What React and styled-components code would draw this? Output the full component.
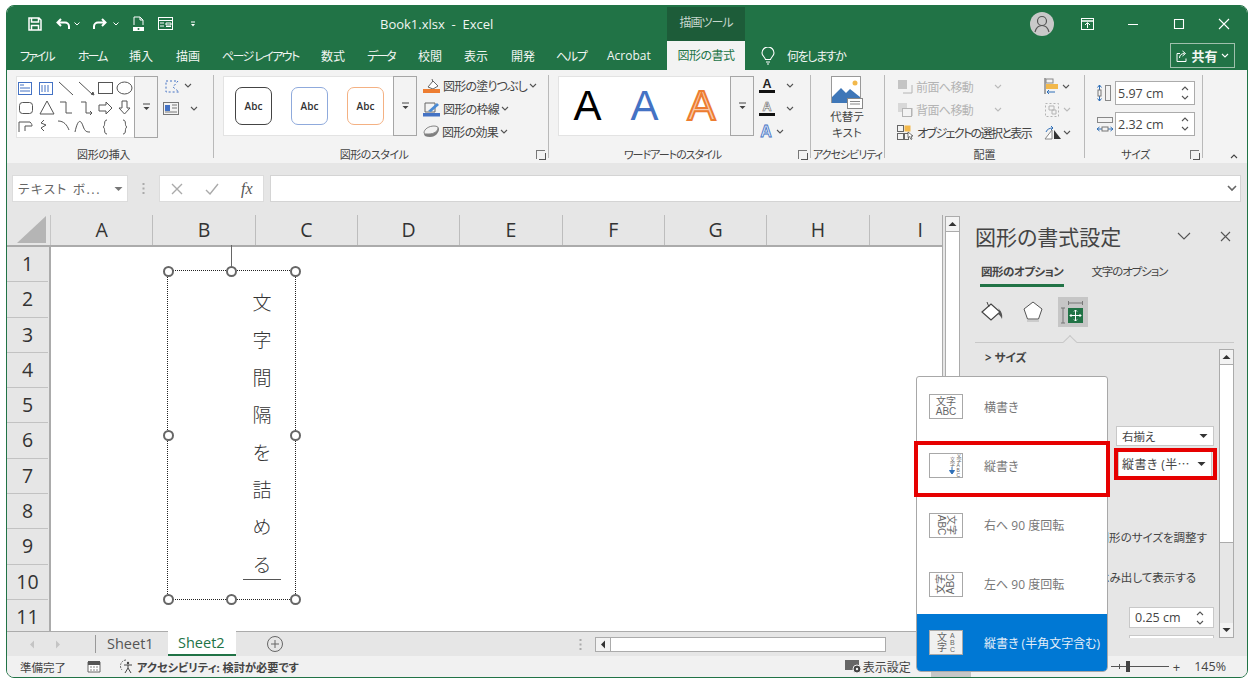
import React from 'react';
import styled, { createGlobalStyle } from 'styled-components';

const GREEN = '#217346';
const FONT = '"Open Sans", "Noto Sans CJK JP", sans-serif';

const Global = createGlobalStyle`
  html, body { margin: 0; padding: 0; background: #fff; overflow: hidden; }
  body { height: 683px; font-family: ${FONT}; font-feature-settings: "palt"; color: #3a3a3a; }
  * { box-sizing: border-box; }
`;

const Window = styled.div`
  position: relative;
  margin: 5px 0 0 6px;
  width: 1242px;
  height: 673px;
  border: 1px solid ${GREEN};
  border-radius: 8px;
  overflow: hidden;
  display: flex;
  flex-direction: column;
  background: #e6e6e6;
`;
const Spacer = styled.span`
  width: ${p => p.$w}px;
  flex: none;
`;

/* title bar */
const TitleBar = styled.div`
  height: 35px;
  flex: none;
  display: flex;
  background: ${GREEN};
  color: #fff;
`;
const Qat = styled.div`
  width: 373px;
  padding-left: 21px;
  display: flex;
  align-items: center;
`;
const QatSlot = styled.div`
  margin-left: ${p => p.$ml ?? 0}px;
  display: flex;
  align-items: center;
`;
const Title = styled.div`
  width: 287px;
  font-size: 13px;
  line-height: 36px;
  color: #f0f5f2;
  white-space: pre;
`;
const ContextTab = styled.div`
  width: 78px;
  margin-top: 1px;
  background: #1d5c39;
  color: #c5d6cc;
  font-size: 12px;
  letter-spacing: -1px;
  text-align: center;
  line-height: 31px;
`;
const WinControls = styled.div`
  flex: 1;
  display: flex;
  justify-content: flex-end;
`;
const WinBtn = styled.div`
  width: 45.5px;
  display: flex;
  align-items: center;
  justify-content: center;
`;

/* tab row */
const TabRow = styled.div`
  height: 29px;
  flex: none;
  display: flex;
  align-items: center;
  padding-left: 13px;
  background: ${GREEN};
  color: #f2f6f3;
  font-size: 12px;
`;
const Tab = styled.div`
  width: ${p => p.$w}px;
  flex: none;
  letter-spacing: ${p => p.$ls ?? 0}px;
  white-space: pre;
`;
const ActiveTab = styled.div`
  width: 78px;
  height: 29px;
  margin-right: 16px;
  background: #f3f3f3;
  color: ${GREEN};
  letter-spacing: -0.5px;
  text-align: center;
  line-height: 29px;
`;
const TellMe = styled.div`
  display: flex;
  align-items: center;
  gap: 12px;
  letter-spacing: -1.4px;
`;
const ShareBtn = styled.div`
  margin-left: auto;
  margin-right: 12px;
  width: 65px;
  height: 25px;
  border: 1px solid #9fc0ac;
  display: flex;
  align-items: center;
  justify-content: center;
  gap: 3px;
  font-size: 13px;
  font-weight: 700;
`;

/* ribbon */
const Ribbon = styled.div`
  height: 93px;
  flex: none;
  display: flex;
  background: #f3f3f3;
  color: #444;
  font-size: 12px;
`;
const Group = styled.div`
  position: relative;
  width: ${p => p.$w}px;
  flex: none;
  margin: 5px 0;
  border-right: 1px solid #b9b9b9;
  display: flex;
  flex-direction: column;
`;
const GroupBody = styled.div`
  flex: 1;
  display: flex;
  align-items: flex-start;
  padding: 1px 0 0 ${p => p.$pl ?? 9}px;
`;
const GroupLabel = styled.div`
  height: 12px;
  margin-bottom: -3px;
  font-size: 11px;
  letter-spacing: ${p => p.$ls ?? 0}px;
  text-align: center;
  line-height: 12px;
  white-space: nowrap;
  padding-right: ${p => p.$pr ?? 0}px;
`;
const Launcher = styled.div`
  position: absolute;
  right: 3px;
  bottom: -1px;
  width: 9px;
  height: 9px;
  border-left: 1px solid #777;
  border-top: 1px solid #777;
  &::after {
    content: '';
    position: absolute;
    left: 2px;
    top: 2px;
    width: 6px;
    height: 6px;
    border-right: 1px solid #555;
    border-bottom: 1px solid #555;
  }
`;
const Gallery = styled.div`
  display: flex;
  width: ${p => p.$w}px;
  height: ${p => p.$h ?? 60}px;
  flex: none;
  background: #fff;
  border: 1px solid #e3e3e3;
  border-right: 0;
`;
const GalleryItems = styled.div`
  flex: 1;
  display: flex;
  align-items: center;
  padding-left: ${p => p.$pl ?? 0}px;
  gap: ${p => p.$gap ?? 0}px;
`;
const GalleryMore = styled.div`
  width: 24px;
  flex: none;
  background: #f3f3f3;
  border: 1px solid #a6a6a6;
  margin: -1px 0;
  display: flex;
  align-items: center;
  justify-content: center;
`;
const StyleChip = styled.div`
  width: 37px;
  height: 38px;
  border: 1.5px solid ${p => p.$c};
  border-radius: 7px;
  font-size: 10px;
  font-weight: 600;
  color: #333;
  display: flex;
  align-items: center;
  justify-content: center;
`;
const ArtLetter = styled.div`
  width: 57px;
  text-align: center;
  font-family: "Liberation Sans", sans-serif;
  font-size: 42px;
  line-height: 58px;
  color: ${p => p.$c};
  -webkit-text-stroke: ${p => p.$stroke || '0'};
`;
const SideList = styled.div`
  display: flex;
  flex-direction: column;
  flex: none;
  width: ${p => (p.$w ? `${p.$w}px` : 'auto')};
  gap: ${p => p.$gap ?? 4}px;
  margin-left: ${p => p.$ml ?? 0}px;
  margin-top: ${p => p.$mt ?? 0}px;
`;
const SideRow = styled.div`
  height: ${p => p.$h ?? 19}px;
  display: flex;
  align-items: center;
  gap: ${p => p.$gap ?? 2}px;
  letter-spacing: ${p => p.$ls ?? 0}px;
  white-space: nowrap;
  color: ${p => (p.$off ? '#b4b4b4' : '#444')};
`;
const AltText = styled.div`
  width: 72px;
  display: flex;
  flex-direction: column;
  align-items: center;
  font-size: 11.5px;
  line-height: 16px;
  text-align: center;
`;
const SizeInput = styled.div`
  width: 80px;
  height: 24px;
  background: #fff;
  border: 1px solid #ababab;
  font-size: 12.5px;
  padding-left: 2px;
  display: flex;
  align-items: center;
  justify-content: space-between;
`;
const Spin = styled.div`
  width: 16px;
  font-size: 0;
  display: flex;
  flex-direction: column;
  align-items: center;
  gap: 4px;
  margin-right: ${p => p.$mr ?? 1}px;
`;
const Collapse = styled.div`
  flex: 1;
  display: flex;
  align-items: flex-end;
  justify-content: flex-end;
  padding: 0 9px 4px 0;
`;

/* formula band */
const FormulaBand = styled.div`
  height: 52px;
  flex: none;
  padding: 12px 6px 13px 5px;
  display: flex;
  background: #e6e6e6;
`;
const NameBox = styled.div`
  width: 116px;
  background: #fff;
  border: 1px solid #dcdcdc;
  font-size: 12.5px;
  letter-spacing: 1.6px;
  color: #666;
  display: flex;
  align-items: center;
  justify-content: space-between;
  padding: 0 4px 0 5px;
`;
const Grip = styled.div`
  width: 31px;
  display: flex;
  align-items: center;
  justify-content: center;
`;
const FxBox = styled.div`
  width: 105px;
  background: #fff;
  border: 1px solid #dcdcdc;
  display: flex;
  align-items: center;
  gap: 22px;
  padding-left: 11px;
  font-family: "Liberation Serif", serif;
  font-style: italic;
  font-size: 16px;
  color: #555;
  margin-right: 6px;
`;
const FormulaInput = styled.div`
  flex: 1;
  background: #fff;
  border: 1px solid #d4d4d4;
  display: flex;
  align-items: center;
  justify-content: flex-end;
  padding-right: 3px;
`;

/* sheet */
const Body = styled.div`
  height: 441px;
  flex: none;
  display: flex;
`;
const SheetColumn = styled.div`
  width: 954px;
  flex: none;
  display: flex;
  flex-direction: column;
`;
const SheetArea = styled.div`
  height: 416px;
  display: flex;
  gap: 2px;
  background: #e6e6e6;
`;
const GridWrap = styled.div`
  width: 936px;
  display: flex;
  flex-direction: column;
  border-right: 1px solid #aaa;
  overflow: hidden;
`;
const ColHeader = styled.div`
  height: 32px;
  flex: none;
  display: flex;
  border-bottom: 2px solid #ababab;
  background: #e6e6e6;
`;
const Corner = styled.div`
  width: 44px;
  flex: none;
  display: flex;
  align-items: flex-end;
  justify-content: flex-end;
  padding: 0 3px 1px 0;
  border-right: 1px solid #c6c6c6;
`;
const ColCell = styled.div`
  width: 102.33px;
  flex: none;
  border-right: 1px solid #bdbdbd;
  text-align: center;
  font-size: 19.5px;
  line-height: 30px;
  color: #333;
`;
const SheetRows = styled.div`
  flex: 1;
  display: flex;
`;
const RowHeader = styled.div`
  width: 44px;
  flex: none;
  padding-right: 1px;
  border-right: 2px solid #ababab;
`;
const RowCell = styled.div`
  height: 35.3px;
  border-bottom: 1px solid #c2c2c2;
  text-align: center;
  font-size: 19.5px;
  line-height: 34px;
  color: #333;
`;
const Cells = styled.div`
  position: relative;
  flex: 1;
  background: #fff;
`;
const RotateLine = styled.div`
  position: absolute;
  left: 180px;
  top: -2px;
  width: 1px;
  height: 26px;
  background: #666;
`;
const Shape = styled.div`
  position: absolute;
  left: 116px;
  top: 23px;
  width: 129px;
  height: 330px;
  border: 1px dotted #222;
`;
const Handle = styled.div`
  position: absolute;
  left: ${p => p.$x}%;
  top: ${p => p.$y}%;
  width: 11px;
  height: 11px;
  margin: -5.5px 0 0 -5.5px;
  border: 2px solid #666;
  border-radius: 50%;
  background: #fff;
`;
const VerticalText = styled.div`
  position: absolute;
  top: 21px;
  left: 74px;
  width: 40px;
  display: flex;
  flex-direction: column;
  align-items: center;
  gap: 15.4px;
  font-size: 19px;
  font-weight: 300;
  line-height: 22px;
  font-feature-settings: normal;
  color: #333;
  &::after {
    content: '';
    width: 38px;
    height: 1px;
    margin-top: -12px;
    background: #555;
  }
`;
const VScroll = styled.div`
  width: 15px;
  flex: none;
  background: #fff;
  border-left: 1px solid #ababab;
  border-right: 1px solid #ababab;
  border-top: 1px solid #ababab;
  margin-top: 1px;
`;
const ScrollBtn = styled.div`
  height: 15px;
  background: #f3f3f3;
  border-bottom: 1px solid #ababab;
  display: flex;
  align-items: center;
  justify-content: center;
`;

/* sheet tabs */
const TabBar = styled.div`
  height: 25px;
  flex: none;
  display: flex;
  align-items: stretch;
  background: #e6e6e6;
  border-top: 1px solid #ababab;
  font-size: 14.5px;
  color: #555;
`;
const TabNav = styled.div`
  width: 89px;
  display: flex;
  align-items: center;
  gap: 20px;
  padding-left: 22px;
  border-right: 1px solid #999;
  margin: 3px 0;
  color: #bbb;
`;
const SheetTab = styled.div`
  width: ${p => (p.$active ? 68 : 72)}px;
  flex: none;
  padding-left: ${p => (p.$active ? 10 : 11)}px;
  line-height: 23px;
  background: ${p => (p.$active ? '#fff' : 'transparent')};
  color: ${p => (p.$active ? GREEN : '#555')};
  border-bottom: ${p => (p.$active ? `2px solid ${GREEN}` : '0')};
  margin-top: ${p => (p.$active ? '-1px' : '0')};
`;
const AddSheet = styled.div`
  margin-left: 31px;
  display: flex;
  align-items: center;
`;
const HGrip = styled.div`
  margin-left: 296px;
  width: 16px;
  display: flex;
  align-items: center;
`;
const HScroll = styled.div`
  width: 291px;
  height: 15px;
  margin-top: 5px;
  background: #fff;
  border: 1px solid #ababab;
  display: flex;
`;
const HScrollBtn = styled.div`
  width: 15px;
  background: #f3f3f3;
  border-right: 1px solid #ababab;
  display: flex;
  align-items: center;
  justify-content: center;
`;

/* format pane */
const Pane = styled.div`
  flex: 1;
  padding: 0 13px 0 14px;
  background: #e6e6e6;
  display: flex;
  flex-direction: column;
  color: #444;
`;
const PaneTitle = styled.div`
  height: 42px;
  display: flex;
  align-items: center;
  font-size: 21px;
  color: #444;
`;
const PaneActions = styled.div`
  margin-left: auto;
  display: flex;
  align-items: center;
  gap: 29px;
  padding-right: 3.5px;
`;
const PaneTabs = styled.div`
  display: flex;
  gap: 26px;
  padding-left: 5px;
  font-size: 11.5px;
  height: 30px;
`;
const PaneTab = styled.div`
  height: 30px;
  line-height: 29px;
  padding: 0 1px;
  white-space: nowrap;
  letter-spacing: ${p => (p.$active ? -0.5 : -1.1)}px;
  font-weight: ${p => (p.$active ? 700 : 400)};
  border-bottom: ${p => (p.$active ? `3px solid ${GREEN}` : '0')};
`;
const PaneIcons = styled.div`
  display: flex;
  align-items: center;
  gap: 10.5px;
  height: 30px;
  margin-top: 10px;
  padding-left: 2px;
`;
const PaneIcon = styled.div`
  width: 30px;
  height: 30px;
  display: flex;
  align-items: center;
  justify-content: center;
  background: ${p => (p.$active ? '#c6c6c6' : 'transparent')};
`;
const PaneRule = styled.div`
  position: relative;
  height: 1px;
  margin-top: 15px;
  background: #c8c8c8;
  &::after {
    content: '';
    position: absolute;
    left: 90px;
    top: -5px;
    width: 9px;
    height: 9px;
    background: #e6e6e6;
    border-left: 1px solid #c8c8c8;
    border-top: 1px solid #c8c8c8;
    transform: rotate(45deg);
  }
`;
const PaneScrollArea = styled.div`
  display: flex;
  margin-top: 6px;
  height: 289px;
`;
const PaneList = styled.div`
  flex: 1;
  display: flex;
  flex-direction: column;
  align-items: flex-end;
  overflow: hidden;
  font-size: 11.5px;
  padding-right: 5px;
`;
const SectionHead = styled.div`
  align-self: flex-start;
  margin: 0 0 0 10px;
  font-weight: 700;
  font-size: 11.5px;
  line-height: 17px;
  height: 17px;
`;
const PaneSelect = styled.div`
  width: ${p => p.$w}px;
  height: ${p => p.$h}px;
  margin-top: ${p => p.$mt}px;
  margin-right: ${p => p.$mr ?? 0}px;
  flex: none;
  background: #fff;
  border: 1px solid #c8c8c8;
  display: flex;
  align-items: center;
  justify-content: space-between;
  padding: 0 5px 0 ${p => p.$pl ?? 5}px;
  font-size: ${p => p.$size ?? 11.5}px;
  letter-spacing: ${p => p.$ls ?? 0}px;
  white-space: nowrap;
`;
const PaneText = styled.div`
  margin-top: ${p => p.$mt}px;
  margin-right: ${p => p.$mr}px;
  flex: none;
  line-height: 18px;
  font-size: 11.5px;
  white-space: nowrap;
`;
const PaneScroll = styled.div`
  position: relative;
  width: 15px;
  flex: none;
  border: 1px solid #ababab;
  border-width: 1px 1px 0 1px;
  display: flex;
  flex-direction: column;
`;
const PaneThumb = styled.div`
  height: 178px;
  background: #fff;
  border-bottom: 1px solid #ababab;
`;
const PaneTrack = styled.div`
  flex: 1;
`;

/* status bar */
const StatusBar = styled.div`
  height: 21px;
  flex: none;
  display: flex;
  align-items: center;
  padding-left: 13px;
  background: #f1f1f1;
  font-size: 11.5px;
  color: #444;
`;
const StatusBold = styled.span`
  font-weight: 700;
  font-size: 11.2px;
`;
const StatusRight = styled.div`
  margin-left: auto;
  height: 100%;
  display: flex;
  align-items: center;
  font-size: 12px;
`;
const ViewBtn = styled.div`
  width: 40px;
  height: 100%;
  margin: 0 140px 0 20px;
  background: #c6c6c6;
`;
const Slider = styled.div`
  position: relative;
  width: 58px;
  height: 1px;
  background: #555;
  margin-right: 4px;
  &::before {
    content: '';
    position: absolute;
    left: 8px;
    top: -2px;
    width: 1px;
    height: 5px;
    background: #555;
  }
  &::after {
    content: '';
    position: absolute;
    left: 15px;
    top: -5px;
    width: 4px;
    height: 11px;
    background: #444;
  }
`;
const Plus = styled.span`
  font-size: 13px;
`;
const Percent = styled.div`
  margin: 0 21px 0 14px;
  font-size: 12.5px;
`;

/* dropdown */
const Menu = styled.div`
  position: absolute;
  left: 909px;
  top: 370px;
  width: 192px;
  height: 296px;
  background: #fff;
  border: 1px solid #a8a8a8;
  border-radius: 3px 3px 5px 5px;
  display: flex;
  flex-direction: column;
  overflow: hidden;
`;
const MenuItem = styled.div`
  flex: ${p => (p.$active ? '0 0 57px' : '1')};
  display: flex;
  align-items: center;
  gap: 21px;
  padding-left: 12px;
  font-size: 12px;
  color: ${p => (p.$active ? '#e4eef8' : '#777')};
  background: ${p => (p.$active ? '#0078d4' : 'transparent')};
  white-space: nowrap;
`;
const GlyphBox = styled.div`
  position: relative;
  width: 34px;
  height: 25px;
  flex: none;
  background: ${p => (p.$active ? '#f0f0f0' : '#fff')};
  border: 1px solid #a8a8a8;
  color: #666;
  display: flex;
  align-items: center;
  justify-content: center;
  overflow: hidden;
`;
const GlyphText = styled.div`
  transform: rotate(${p => p.$rot ?? 0}deg);
  transform-origin: center;
  font-family: "Liberation Sans", "Noto Sans CJK JP", sans-serif;
  font-feature-settings: normal;
  font-size: 10px;
  line-height: 10px;
  text-align: center;
  white-space: pre;
`;
const GlyphColumns = styled.div`
  margin-left: ${p => p.$ml ?? 0}px;
  display: flex;
  align-items: center;
  gap: ${p => p.$gap ?? 2}px;
`;
const GlyphColumn = styled.div`
  display: flex;
  flex-direction: column;
  align-items: center;
  font-family: "Liberation Sans", "Noto Sans CJK JP", sans-serif;
  font-size: ${p => p.$size ?? 10}px;
  line-height: ${p => p.$size ?? 10}px;
`;
const RedBox = styled.div`
  position: absolute;
  left: ${p => p.$x}px;
  top: ${p => p.$y}px;
  width: ${p => p.$w}px;
  height: ${p => p.$h}px;
  border: 4px solid #e60000;
`;

/* drawn icons */
const Svg = ({ w, h, children, ...rest }) => (
  <svg width={w} height={h} viewBox={`0 0 ${w} ${h}`} fill="none" style={{ flex: 'none', display: 'block' }} {...rest}>
    {children}
  </svg>
);
const Caret = ({ c = '#555' }) => (
  <Svg w={8} h={5}><path d="M1 1l3 3 3-3" stroke={c} strokeWidth="1.1" /></Svg>
);
const CaretUp = ({ c = '#555' }) => (
  <Svg w={8} h={5}><path d="M1 4l3-3 3 3" stroke={c} strokeWidth="1.1" /></Svg>
);
const Tri = ({ dir = 'up', c = '#333' }) => {
  const d = { up: 'M0.5 5L4.5 1l4 4z', down: 'M0.5 1L4.5 5l4-4z', left: 'M5 0.5L1 4.5l4 4z', right: 'M1 0.5L5 4.5l-4 4z' }[dir];
  return dir === 'left' || dir === 'right'
    ? <Svg w={6} h={9}><path d={d} fill={c} /></Svg>
    : <Svg w={9} h={6}><path d={d} fill={c} /></Svg>;
};
const MoreIcon = () => (
  <Svg w={9} h={8}><path d="M1 1h7" stroke="#444" /><path d="M1.5 4h6L4.500 7z" fill="#444" /></Svg>
);
const MoreSmall = () => (
  <Svg w={6} h={6}><path d="M1 1h4" stroke="#fff" /><path d="M1 3h4L3 5.500z" fill="#fff" /></Svg>
);
const SaveIcon = () => (
  <Svg w={14} h={14}><path d="M1 1h10l2 2v10H1z M3.500 1v4h7V1 M3.500 13V8.500h7V13" stroke="#fff" strokeWidth="1.500" /></Svg>
);
const UndoIcon = ({ flip }) => (
  <svg width={15} height={12} viewBox="0 0 15 12" fill="none" style={{ transform: flip ? 'scaleX(-1)' : 'none', display: 'block' }}>
    <path d="M5 1L1.500 4.500 5 8M2 4.500h7a4 4 0 0 1 4 4V11" stroke="#fff" strokeWidth="2" />
  </svg>
);
const QatCaret = () => (
  <Svg w={6} h={4}><path d="M.5.500l2.500 2.500 2.500-2.500" stroke="#fff" /></Svg>
);
const PreviewIcon = () => (
  <Svg w={13} h={16}><path d="M2 9V1h6l3 3v5M8 1v3h3" stroke="#fff" /><rect x="1" y="11" width="11" height="4" fill="#fff" /><circle cx="6.500" cy="13" r="1" fill={GREEN} /></Svg>
);
const FormIcon = () => (
  <Svg w={15} h={13}><rect x=".5" y=".5" width="14" height="12" stroke="#fff" /><path d="M.5 3.500h14M2 6h4M8 6h5v2H8zM2 9h4M8 9.500h5" stroke="#fff" /></Svg>
);
const Avatar = () => (
  <Svg w={24} h={24}>
    <circle cx="12" cy="12" r="12" fill="#c9c9c9" />
    <circle cx="12" cy="9" r="4.500" stroke="#555" strokeWidth="1.200" />
    <path d="M5 20c1-4 4-6.500 7-6.500s6 2.500 7 6.500" stroke="#555" strokeWidth="1.200" />
  </Svg>
);
const RibbonOptions = () => (
  <Svg w={13} h={12}><rect x=".5" y=".5" width="12" height="11" stroke="#fff" /><path d="M.5 3h12" stroke="#fff" strokeWidth="1.500" /><path d="M6.500 10V5M4 7l2.500-2.500L9 7" stroke="#fff" /></Svg>
);
const LineIcon = ({ d, c = '#fff', w = 12, h = 12, sw = 1.1 }) => (
  <Svg w={w} h={h}><path d={d} stroke={c} strokeWidth={sw} /></Svg>
);
const Bulb = () => (
  <Svg w={14} h={18}><path d="M4.500 12.500C4 10 1 9 1 6a6 6 0 0 1 12 0c0 3-3 4-3.500 6.500zM5 15h4M6 17h2" stroke="#fff" strokeWidth="1.100" /></Svg>
);
const ShareIcon = () => (
  <Svg w={12} h={12}><path d="M4 3.500H1v8h9v-3M3.500 8c0-3 2-4.500 5-4.500M6.500 1l3 2.500-3 2.500" stroke="#fff" /></Svg>
);
const ShapesGallery = () => (
  <Svg w={117} h={60} stroke="#555">
    <rect x="1.500" y="5.500" width="13" height="12" stroke="#4472c4" />
    <path d="M3 8h4M3 11h10M3 14h10" stroke="#4472c4" />
    <rect x="22.500" y="5.500" width="13" height="12" stroke="#4472c4" />
    <path d="M25 8v7M28 8v7M31 8v7" stroke="#4472c4" />
    <path d="M42 5l14 13M62 5l14 13" stroke="#555" />
    <path d="M77 18l-3-1 2-2z" fill="#555" />
    <rect x="81.500" y="5.500" width="14" height="11" />
    <ellipse cx="107.500" cy="11" rx="7.500" ry="6" />
    <rect x="2.500" y="25.500" width="13" height="11" rx="3" />
    <path d="M30 24l7 13H23zM43 25h6v11h6M64 25h5v11h6M73 34l2 2-2 2" />
    <path d="M82 28h7v-3l6 6-6 6v-3h-7zM105 24h5v7h3l-5.500 6-5.500-6h3z" />
    <path d="M2 55V45h11c2 2 2 3 2 4H8v5M27 43l-3 3 5 2-5 3 3 3M41 44c6 0 9 4 11 9M58 55c3-14 6-12 8-6s4 6 7 6" />
    <path d="M90 43c-4 0-1 6-4 7 3 1 0 7 4 7M106 43c4 0 1 6 4 7-3 1 0 7-4 7" />
  </Svg>
);
const EditPointsIcon = () => (
  <Svg w={20} h={16}>
    <path d="M3 3h12l-5 6 6 5H3z" stroke="#4472c4" strokeDasharray="2 2" />
  </Svg>
);
const TextBoxIcon = () => (
  <Svg w={16} h={13}><rect x=".5" y=".5" width="15" height="12" stroke="#777" /><path d="M2 3h5v6H2z" fill="#4472c4" /><path d="M9 3h5M9 6h5M2 10h12" stroke="#777" /></Svg>
);
const FillIcon = () => (
  <Svg w={18} h={16}><path d="M5 9l5-6 5 5-5 3z" stroke="#666" fill="#fff" /><path d="M9 1l1 3" stroke="#666" /><rect y="11" width="17" height="4" fill="#ed7d31" /></Svg>
);
const BorderIcon = () => (
  <Svg w={18} h={16}><path d="M2 2h10v9H2z" stroke="#666" /><path d="M5 10l9-8 2 2-8 7z" fill="#4a8ad4" /><rect y="12" width="17" height="3.500" fill="#4472c4" /></Svg>
);
const EffectIcon = () => (
  <Svg w={17} h={14}><path d="M1 9c0-5 5-8 10-8 3 0 5 1 5 3 0 3-3 8-9 8-4 0-6-1-6-3z" fill="#7f7f7f" /><path d="M1 8c0-4 5-7 10-7 3 0 4 1 4 2 0 3-4 6-9 6-3 0-5 0-5-1z" fill="#f2f2f2" stroke="#888" /></Svg>
);
const UnderA = ({ bar, c = '#222', outlined }) => (
  <Svg w={16} h={17}>
    <text x="8" y="11" textAnchor="middle" fontSize="12.500" fontFamily="Liberation Sans" fontWeight="700" fill={outlined ? '#fff' : c} stroke={outlined ? '#666' : 'none'} strokeWidth=".6">A</text>
    <rect y="13" width="16" height="3" fill={bar} />
  </Svg>
);
const EffectA = () => (
  <Svg w={14} h={15}>
    <text x="7" y="13" textAnchor="middle" fontSize="16" fontFamily="Liberation Sans" fontWeight="700" fill="#dce8f8" stroke="#4472c4" strokeWidth=".8">A</text>
  </Svg>
);
const AltIcon = () => (
  <Svg w={32} h={33}>
    <rect x=".500" y=".500" width="29" height="26" fill="#fff" stroke="#999" />
    <circle cx="24" cy="7" r="2.500" fill="#f2b84b" />
    <path d="M1 21l9-9 5 5 4-4 10 8v6H1z" fill="#3f77b8" />
    <rect x="16.500" y="22.500" width="15" height="10" fill="#fff" stroke="#888" />
    <path d="M19 25.500h10M19 28h10" stroke="#888" />
  </Svg>
);
const FrontIcon = ({ back }) => (
  <Svg w={16} h={14}>
    <rect x="1" y="0" width="9" height="9" fill={back ? '#d8d8d8' : '#c4c4c4'} />
    <path d="M6 13h9V5" stroke="#b4b4b4" />
    {back && <rect x="5.500" y="5.500" width="9" height="8" fill="#f3f3f3" stroke="#b4b4b4" />}
  </Svg>
);
const SelectionIcon = () => (
  <Svg w={17} h={16}>
    <rect x=".5" y=".5" width="6" height="6" stroke="#666" />
    <rect x="7.500" y=".5" width="6" height="6" fill="#f2b84b" />
    <rect x=".5" y="8.500" width="6" height="6" stroke="#666" />
    <rect x="7.500" y="8.500" width="4" height="6" stroke="#666" />
    <path d="M11 7l5 4h-2l1 3-1 .5-1.500-3-1.500 1z" fill="#fff" stroke="#444" strokeWidth=".7" />
  </Svg>
);
const AlignIcon = () => (
  <Svg w={15} h={17}><path d="M1 0v16" stroke="#555" /><rect x="2" y="1" width="7" height="4" stroke="#888" /><rect x="2" y="6" width="12" height="5" fill="#f2b84b" /><path d="M11 14H3M5 12l-2 2 2 2" stroke="#2f6fb7" /></Svg>
);
const GroupIcon = () => (
  <Svg w={16} h={16}><rect x="1.500" y="1.500" width="13" height="13" stroke="#b4b4b4" strokeDasharray="2 2" /><path d="M5 4h5v4H5zM8 8h4v4H8z" stroke="#b4b4b4" /></Svg>
);
const RotateIcon = () => (
  <Svg w={18} h={14}><path d="M1 13l7-9v9z" fill="#fff" stroke="#888" /><path d="M10 4l7 9h-7z" fill="#333" /><path d="M2 6c1-3 4-4 7-4M7 0l2 2-2 2" stroke="#2f6fb7" /></Svg>
);
const HeightIcon = () => (
  <Svg w={16} h={18}><path d="M3.500 1v16M1.500 3.500l2-2.500 2 2.500M1.500 14.500l2 2.500 2-2.500" stroke="#2f6fb7" /><rect x="2" y="6" width="3" height="6" fill="#f3f3f3" stroke="#777" /><rect x="9.500" y="1.500" width="5" height="15" stroke="#888" /></Svg>
);
const WidthIcon = () => (
  <Svg w={18} h={17}><rect x="1.500" y="1.500" width="15" height="5" stroke="#888" /><path d="M1 13h16M3.500 11l-2.500 2 2.500 2M14.500 11l2.500 2-2.500 2" stroke="#2f6fb7" /><rect x="6" y="11" width="6" height="4" fill="#f3f3f3" stroke="#777" /></Svg>
);
const Paint = () => (
  <Svg w={24} h={24}><path d="M2 12l9-8 9 8-9 8z" fill="#fff" stroke="#444" strokeWidth="1.200" /><path d="M9 7l-2-5" stroke="#444" /><path d="M18 8c3 3 5 6 4 11-1-2-2-4-4-5l2-2z" fill="#555" /></Svg>
);
const Pentagon = () => (
  <Svg w={20} h={22}><path d="M10 1l9 7-3.500 10h-11L1 8z" fill="#fff" stroke="#555" /><path d="M4 20h12" stroke="#ccc" strokeWidth="2" /></Svg>
);
const LayoutIcon = () => (
  <Svg w={28} h={24}>
    <path d="M9 3h15M9.500 1v4M23.500 1v4" stroke="#777" />
    <path d="M2 8h4M2 23h4M4 8v15" stroke="#777" />
    <rect x="9" y="8" width="15" height="15" fill={GREEN} />
    <path d="M16.500 10v11M11 15.500h11M15 11.500l1.500-1.500 1.500 1.500M15 19.500l1.500 1.500 1.500-1.500M12.500 14l-1.500 1.500 1.500 1.500M20.500 14l1.500 1.500-1.500 1.500" stroke="#fff" />
  </Svg>
);
const SheetPlus = () => (
  <Svg w={16} h={16}><circle cx="8" cy="8" r="7.500" stroke="#666" /><path d="M8 4v8M4 8h8" stroke="#666" /></Svg>
);
const Dots = () => (
  <Svg w={3} h={13}><path d="M1.500 1v2M1.500 5.500v2M1.500 10v2" stroke="#aaa" strokeWidth="2" /></Svg>
);
const CalcIcon = () => (
  <Svg w={14} h={13}><path d="M1 2h12v10H1z" fill="#fff" stroke="#666" /><rect x="1" y="1" width="12" height="4" fill="#555" /><path d="M3 7h2M6 7h2M9 7h2M3 10h2M6 10h2M9 10h2" stroke="#888" /></Svg>
);
const AccessIcon = () => (
  <Svg w={17} h={15}><path d="M8 1a6 6 0 0 0-4 10" stroke="#666" strokeDasharray="2 1" /><circle cx="10" cy="4" r="1.200" fill="#444" /><path d="M6 6h8M10 6v3l-3 5M10 9l3 5" stroke="#444" /></Svg>
);
const DisplayIcon = () => (
  <Svg w={17} h={15}><rect y="1" width="14" height="10" fill="#666" /><circle cx="12" cy="10" r="4" fill="#444" stroke="#f1f1f1" /><circle cx="12" cy="10" r="1.200" fill="#f1f1f1" /></Svg>
);
const VerticalArrow = () => (
  <Svg w={6} h={7}><path d="M3 0v4M0.500 3.500L3 7l2.500-3.500z" fill="#2f6fb7" stroke="#2f6fb7" /></Svg>
);

const tabs = [
  ['ファイル', 58, -2],
  ['ホーム', 51, -2],
  ['挿入', 47, 0],
  ['描画', 46, 0],
  ['ページ レイアウト', 99, -1.6],
  ['数式', 46, 0],
  ['データ', 51, -2],
  ['校閲', 46, 0],
  ['表示', 47, 0],
  ['開発', 45, 0],
  ['ヘルプ', 51, -1.3],
  ['Acrobat', 60, 0],
];
const columns = ['A', 'B', 'C', 'D', 'E', 'F', 'G', 'H', 'I'];
const rows = [1, 2, 3, 4, 5, 6, 7, 8, 9, 10, 11];
const verticalText = ['文', '字', '間', '隔', 'を', '詰', 'め', 'る'];
const handles = [[0, 0], [50, 0], [100, 0], [0, 50], [100, 50], [0, 100], [50, 100], [100, 100]];

function TopBars() {
  return (
    <>
      <TitleBar>
        <Qat>
          <QatSlot><SaveIcon /></QatSlot>
          <QatSlot $ml={14}><UndoIcon /></QatSlot>
          <QatSlot $ml={3}><QatCaret /></QatSlot>
          <QatSlot $ml={12}><UndoIcon flip /></QatSlot>
          <QatSlot $ml={6}><QatCaret /></QatSlot>
          <QatSlot $ml={13}><PreviewIcon /></QatSlot>
          <QatSlot $ml={13}><FormIcon /></QatSlot>
          <QatSlot $ml={17}><MoreSmall /></QatSlot>
        </Qat>
        <Title>Book1.xlsx  -  Excel</Title>
        <ContextTab>描画ツール</ContextTab>
        <WinControls>
          <WinBtn><Avatar /></WinBtn>
          <WinBtn><RibbonOptions /></WinBtn>
          <WinBtn><LineIcon d="M1 6.500h10" /></WinBtn>
          <WinBtn><LineIcon d="M1.500 1.500h9v9h-9z" /></WinBtn>
          <WinBtn><LineIcon d="M1 1l10 10M11 1L1 11" /></WinBtn>
        </WinControls>
      </TitleBar>
      <TabRow>
        {tabs.map(([label, w, ls]) => <Tab key={label} $w={w} $ls={ls}>{label}</Tab>)}
        <ActiveTab>図形の書式</ActiveTab>
        <TellMe><Bulb />何をしますか</TellMe>
        <ShareBtn><ShareIcon />共有<Caret c="#fff" /></ShareBtn>
      </TabRow>
    </>
  );
}

function RibbonBar() {
  return (
    <Ribbon>
      <Group $w={207}>
        <GroupBody>
          <Gallery $w={141} $h={62}>
            <GalleryItems><ShapesGallery /></GalleryItems>
            <GalleryMore><MoreIcon /></GalleryMore>
          </Gallery>
          <SideList $ml={6} $gap={4}>
            <SideRow $gap={1}><EditPointsIcon /><Caret /></SideRow>
            <SideRow $gap={11}><TextBoxIcon /><Caret /></SideRow>
          </SideList>
        </GroupBody>
        <GroupLabel $pr={13} $ls={-0.3}>図形の挿入</GroupLabel>
      </Group>
      <Group $w={335}>
        <GroupBody>
          <Gallery $w={194}>
            <GalleryItems $pl={11} $gap={19}>
              <StyleChip $c="#444">Abc</StyleChip>
              <StyleChip $c="#8faadc">Abc</StyleChip>
              <StyleChip $c="#f4b183">Abc</StyleChip>
            </GalleryItems>
            <GalleryMore><MoreIcon /></GalleryMore>
          </Gallery>
          <SideList $ml={6} $gap={4}>
            <SideRow $ls={-0.8}><FillIcon />図形の塗りつぶし<Caret /></SideRow>
            <SideRow $ls={-0.7}><BorderIcon />図形の枠線<Caret /></SideRow>
            <SideRow $ls={-0.7}><EffectIcon />図形の効果<Caret /></SideRow>
          </SideList>
        </GroupBody>
        <GroupLabel $ls={-0.5} $pr={14}>図形のスタイル</GroupLabel>
        <Launcher />
      </Group>
      <Group $w={262}>
        <GroupBody>
          <Gallery $w={194}>
            <GalleryItems>
              <ArtLetter $c="#000">A</ArtLetter>
              <ArtLetter $c="#4472c4">A</ArtLetter>
              <ArtLetter $c="#f8cbad" $stroke="2px #ed7d31">A</ArtLetter>
            </GalleryItems>
            <GalleryMore><MoreIcon /></GalleryMore>
          </Gallery>
          <SideList $ml={7} $gap={4}>
            <SideRow $gap={11}><UnderA bar="#111" /><Caret /></SideRow>
            <SideRow $gap={11}><UnderA bar="#111" outlined /><Caret /></SideRow>
            <SideRow $gap={3}><EffectA /><Caret /></SideRow>
          </SideList>
        </GroupBody>
        <GroupLabel $ls={-1} $pr={14}>ワードアートのスタイル</GroupLabel>
        <Launcher />
      </Group>
      <Group $w={74}>
        <GroupBody $pl={0}>
          <AltText><AltIcon />代替テ<br />キスト</AltText>
        </GroupBody>
        <GroupLabel $ls={-1}>アクセシビリティ</GroupLabel>
      </Group>
      <Group $w={200}>
        <GroupBody $pl={12}>
          <SideList $gap={4} $mt={1} $w={147}>
            <SideRow $off $gap={3} $ls={-0.6}><FrontIcon />前面へ移動<Spacer $w={15} /><Caret c="#bbb" /></SideRow>
            <SideRow $off $gap={3} $ls={-0.6}><FrontIcon back />背面へ移動<Spacer $w={15} /><Caret c="#bbb" /></SideRow>
            <SideRow $gap={3} $ls={-1.6}><SelectionIcon />オブジェクトの選択と表示</SideRow>
          </SideList>
          <SideList $mt={1} $gap={4}>
            <SideRow $gap={3}><AlignIcon /><Caret /></SideRow>
            <SideRow $gap={3}><GroupIcon /><Caret c="#bbb" /></SideRow>
            <SideRow $gap={1}><RotateIcon /><Caret /></SideRow>
          </SideList>
        </GroupBody>
        <GroupLabel>配置</GroupLabel>
      </Group>
      <Group $w={118}>
        <GroupBody $pl={11}>
          <SideList $gap={7} $mt={5}>
            <SideRow $gap={3} $h={24}>
              <HeightIcon />
              <SizeInput>5.97 cm<Spin><CaretUp /><Caret /></Spin></SizeInput>
            </SideRow>
            <SideRow $gap={1} $h={24}>
              <WidthIcon />
              <SizeInput>2.32 cm<Spin><CaretUp /><Caret /></Spin></SizeInput>
            </SideRow>
          </SideList>
        </GroupBody>
        <GroupLabel $pr={16} $ls={-0.5}>サイズ</GroupLabel>
        <Launcher />
      </Group>
      <Collapse><CaretUp c="#444" /></Collapse>
    </Ribbon>
  );
}

function SheetGrid() {
  return (
    <SheetArea>
      <GridWrap>
        <ColHeader>
          <Corner>
            <Svg w={30} h={28}><path d="M29 0v27H0z" fill="#b5b5b5" /></Svg>
          </Corner>
          {columns.map(c => <ColCell key={c}>{c}</ColCell>)}
        </ColHeader>
        <SheetRows>
          <RowHeader>
            {rows.map(r => <RowCell key={r}>{r}</RowCell>)}
          </RowHeader>
          <Cells>
            <RotateLine />
            <Shape>
              <VerticalText>
                {verticalText.map((t, i) => <span key={i}>{t}</span>)}
              </VerticalText>
              {handles.map(([x, y]) => <Handle key={`${x}-${y}`} $x={x} $y={y} />)}
            </Shape>
          </Cells>
        </SheetRows>
      </GridWrap>
      <VScroll>
        <ScrollBtn><Tri dir="up" /></ScrollBtn>
      </VScroll>
    </SheetArea>
  );
}

function SheetTabs() {
  return (
    <TabBar>
      <TabNav><Tri dir="left" c="#c4c4c4" /><Tri dir="right" c="#c4c4c4" /></TabNav>
      <SheetTab>Sheet1</SheetTab>
      <SheetTab $active>Sheet2</SheetTab>
      <AddSheet><SheetPlus /></AddSheet>
      <HGrip><Dots /></HGrip>
      <HScroll>
        <HScrollBtn><Tri dir="left" /></HScrollBtn>
      </HScroll>
    </TabBar>
  );
}

function FormatPane() {
  return (
    <Pane>
      <PaneTitle>
        図形の書式設定
        <PaneActions>
          <LineIcon w={14} h={8} c="#555" d="M1 1l6 6 6-6" />
          <LineIcon w={11} h={11} c="#555" d="M1 1l9 9M10 1l-9 9" />
        </PaneActions>
      </PaneTitle>
      <PaneTabs>
        <PaneTab $active>図形のオプション</PaneTab>
        <PaneTab>文字のオプション</PaneTab>
      </PaneTabs>
      <PaneIcons>
        <PaneIcon><Paint /></PaneIcon>
        <PaneIcon><Pentagon /></PaneIcon>
        <PaneIcon $active><LayoutIcon /></PaneIcon>
      </PaneIcons>
      <PaneRule />
      <PaneScrollArea>
        <PaneList>
          <SectionHead>&gt; サイズ</SectionHead>
          <PaneSelect $w={98} $h={20} $mt={60}>右揃え<Tri dir="down" /></PaneSelect>
          <PaneSelect $w={94} $h={26} $mt={5} $mr={2} $pl={3} $size={12} $ls={0.4}>縦書き (半⋯<Tri dir="down" /></PaneSelect>
          <PaneText $mt={52} $mr={7}>図形のサイズを調整す</PaneText>
          <PaneText $mt={22} $mr={18}>はみ出して表示する</PaneText>
          <PaneSelect $w={85} $h={21} $mt={20} $size={12.5}>0.25 cm<Spin $mr={0}><CaretUp /><Caret /></Spin></PaneSelect>
          <PaneSelect $w={85} $h={21} $mt={7} />
        </PaneList>
        <PaneScroll>
          <ScrollBtn><Tri dir="up" /></ScrollBtn>
          <PaneThumb />
          <PaneTrack />
          <ScrollBtn><Tri dir="down" /></ScrollBtn>
        </PaneScroll>
      </PaneScrollArea>
    </Pane>
  );
}

function TextDirectionMenu() {
  return (
    <Menu>
      <MenuItem>
        <GlyphBox><GlyphText>{'文字\nABC'}</GlyphText></GlyphBox>
        横書き
      </MenuItem>
      <MenuItem>
        <GlyphBox>
          <GlyphColumns $ml={19} $gap={1}>
            <GlyphColumn $size={5}>文<br />字<br /><VerticalArrow /></GlyphColumn>
            <GlyphColumn $size={5}>文<br />字<br />A<br />B<br />C</GlyphColumn>
          </GlyphColumns>
        </GlyphBox>
        縦書き
      </MenuItem>
      <MenuItem>
        <GlyphBox><GlyphText $rot={90}>{'文字\nABC'}</GlyphText></GlyphBox>
        右へ 90 度回転
      </MenuItem>
      <MenuItem>
        <GlyphBox><GlyphText $rot={-90}>{'文字\nABC'}</GlyphText></GlyphBox>
        左へ 90 度回転
      </MenuItem>
      <MenuItem $active>
        <GlyphBox $active>
          <GlyphColumns $gap={3}>
            <GlyphColumn>文<br />字</GlyphColumn>
            <GlyphColumn $size={7}>A<br />B<br />C</GlyphColumn>
          </GlyphColumns>
        </GlyphBox>
        縦書き (半角文字含む)
      </MenuItem>
    </Menu>
  );
}

function Status() {
  return (
    <StatusBar>
      準備完了
      <Spacer $w={21} />
      <CalcIcon />
      <Spacer $w={17} />
      <AccessIcon />
      <Spacer $w={2} />
      <StatusBold>アクセシビリティ: 検討が必要です</StatusBold>
      <StatusRight>
        <DisplayIcon />
        <Spacer $w={1} />
        表示設定
        <ViewBtn />
        <Slider />
        <Plus>+</Plus>
        <Percent>145%</Percent>
      </StatusRight>
    </StatusBar>
  );
}

export default function App() {
  return (
    <>
      <Global />
      <Window>
        <TopBars />
        <RibbonBar />
        <FormulaBand>
          <NameBox>テキスト ボ...<Tri dir="down" c="#777" /></NameBox>
          <Grip><Dots /></Grip>
          <FxBox>
            <LineIcon w={12} h={12} c="#aaa" d="M1 1l10 10M11 1L1 11" sw={1.4} />
            <LineIcon w={14} h={12} c="#aaa" d="M1 7l4 4 8-10" sw={1.4} />
            fx
          </FxBox>
          <FormulaInput><LineIcon w={10} h={7} c="#666" d="M1 1l4 4 4-4" sw={1.6} /></FormulaInput>
        </FormulaBand>
        <Body>
          <SheetColumn>
            <SheetGrid />
            <SheetTabs />
          </SheetColumn>
          <FormatPane />
        </Body>
        <Status />
        <TextDirectionMenu />
        <RedBox $x={907} $y={435} $w={196} $h={56} />
        <RedBox $x={1107} $y={442} $w={103} $h={32} />
      </Window>
    </>
  );
}
